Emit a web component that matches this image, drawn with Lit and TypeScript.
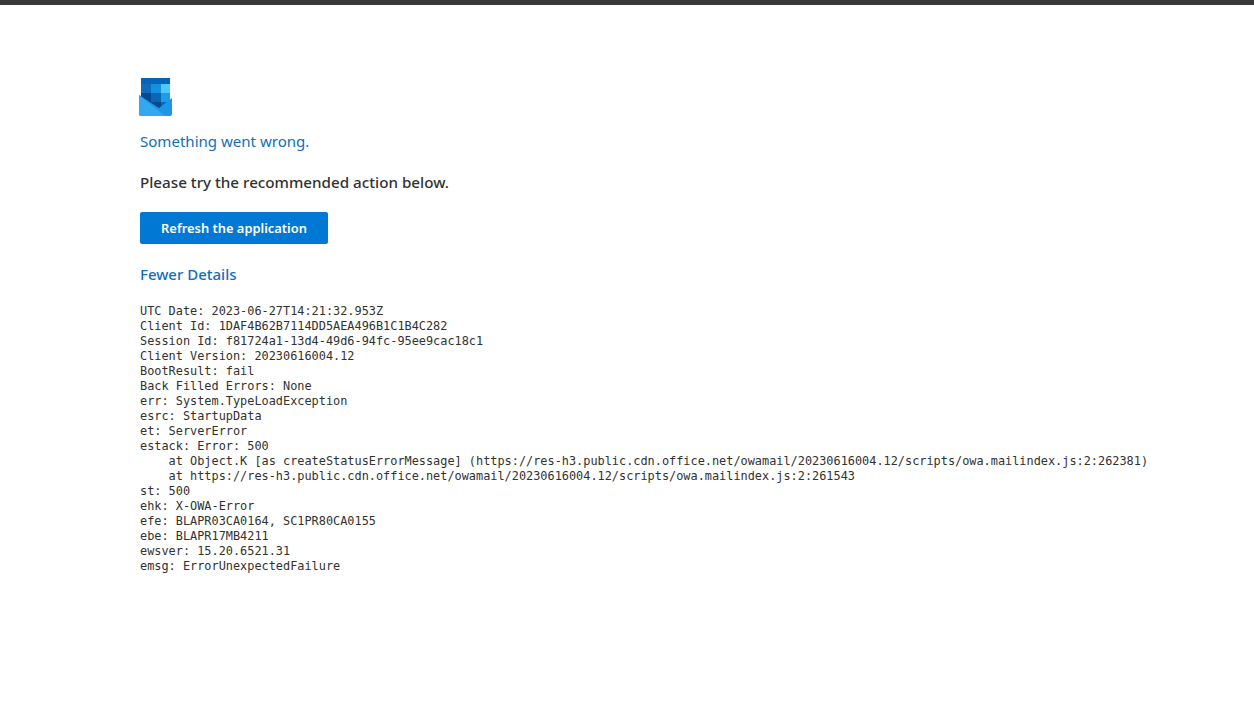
import { LitElement, html, css, svg } from "lit";
import { customElement } from "lit/decorators.js";

const DETAILS = `UTC Date: 2023-06-27T14:21:32.953Z
Client Id: 1DAF4B62B7114DD5AEA496B1C1B4C282
Session Id: f81724a1-13d4-49d6-94fc-95ee9cac18c1
Client Version: 20230616004.12
BootResult: fail
Back Filled Errors: None
err: System.TypeLoadException
esrc: StartupData
et: ServerError
estack: Error: 500
    at Object.K [as createStatusErrorMessage] (https://res-h3.public.cdn.office.net/owamail/20230616004.12/scripts/owa.mailindex.js:2:262381)
    at https://res-h3.public.cdn.office.net/owamail/20230616004.12/scripts/owa.mailindex.js:2:261543
st: 500
ehk: X-OWA-Error
efe: BLAPR03CA0164, SC1PR80CA0155
ebe: BLAPR17MB4211
ewsver: 15.20.6521.31
emsg: ErrorUnexpectedFailure`;

const logo = svg`<svg class="logo" width="34" height="38" viewBox="0 0 34 38">
  <rect x="2" y="0" width="29" height="6" fill="#0364b8"/>
  <rect x="2" y="6" width="10" height="9" fill="#0f6cbd"/>
  <rect x="12" y="6" width="10" height="9" fill="#1490df"/>
  <rect x="22" y="6" width="9" height="9" fill="#50c8fb"/>
  <rect x="2" y="15" width="10" height="9" fill="#064a8c"/>
  <rect x="12" y="15" width="10" height="9" fill="#0a66b5"/>
  <rect x="22" y="15" width="9" height="9" fill="#1f9be8"/>
  <rect x="2" y="24" width="20" height="8" fill="#064a8c"/>
  <rect x="22" y="24" width="9" height="8" fill="#0a66b5"/>
  <path d="M0 17 L20 30 L33 20 L33 36 Q33 38 31 38 L2 38 Q0 38 0 36 Z" fill="#1c96e6"/>
  <path d="M0 17 L26 38 L2 38 Q0 38 0 36 Z" fill="#34a8ee"/>
</svg>`;

@customElement("app-root")
export class AppRoot extends LitElement {
  static styles = css`
    :host {
      display: block;
      background: #fff;
      min-height: 725px;
      font-family: "Noto Sans", "Open Sans", sans-serif;
    }
    .topbar {
      height: 5px;
      background: #3a3a3a;
    }
    .content {
      display: flex;
      flex-direction: column;
      align-items: flex-start;
      padding: 73px 0 0 139px;
    }
    .logo {
      display: block;
      margin-bottom: 14px;
    }
    .title {
      margin-left: 1px;
      font-size: 15.05px;
      line-height: 22px;
      color: #106ebe;
    }
    .subtitle {
      margin: 19px 0 0 1px;
      font-size: 15.2px;
      line-height: 22px;
      font-weight: 500;
      color: #323130;
    }
    .refresh {
      margin: 19px 0 0 1px;
      width: 188px;
      height: 32px;
      border: none;
      border-radius: 2px;
      background: #0078d4;
      color: #fff;
      font: 600 12.9px/33px "Noto Sans", sans-serif;
      padding: 0;
    }
    .toggle {
      margin: 19px 0 0 1px;
      font-size: 15px;
      line-height: 22px;
      font-weight: 500;
      color: #106ebe;
    }
    pre {
      margin: 19px 0 0 1px;
      font-family: "DejaVu Sans Mono", monospace;
      font-size: 11.88px;
      line-height: 15px;
      color: #323130;
    }
  `;

  render() {
    return html`
      <div class="topbar"></div>
      <main class="content">
        ${logo}
        <div class="title">Something went wrong.</div>
        <div class="subtitle">Please try the recommended action below.</div>
        <button class="refresh">Refresh the application</button>
        <div class="toggle">Fewer Details</div>
        <pre>${DETAILS}</pre>
      </main>
    `;
  }
}
